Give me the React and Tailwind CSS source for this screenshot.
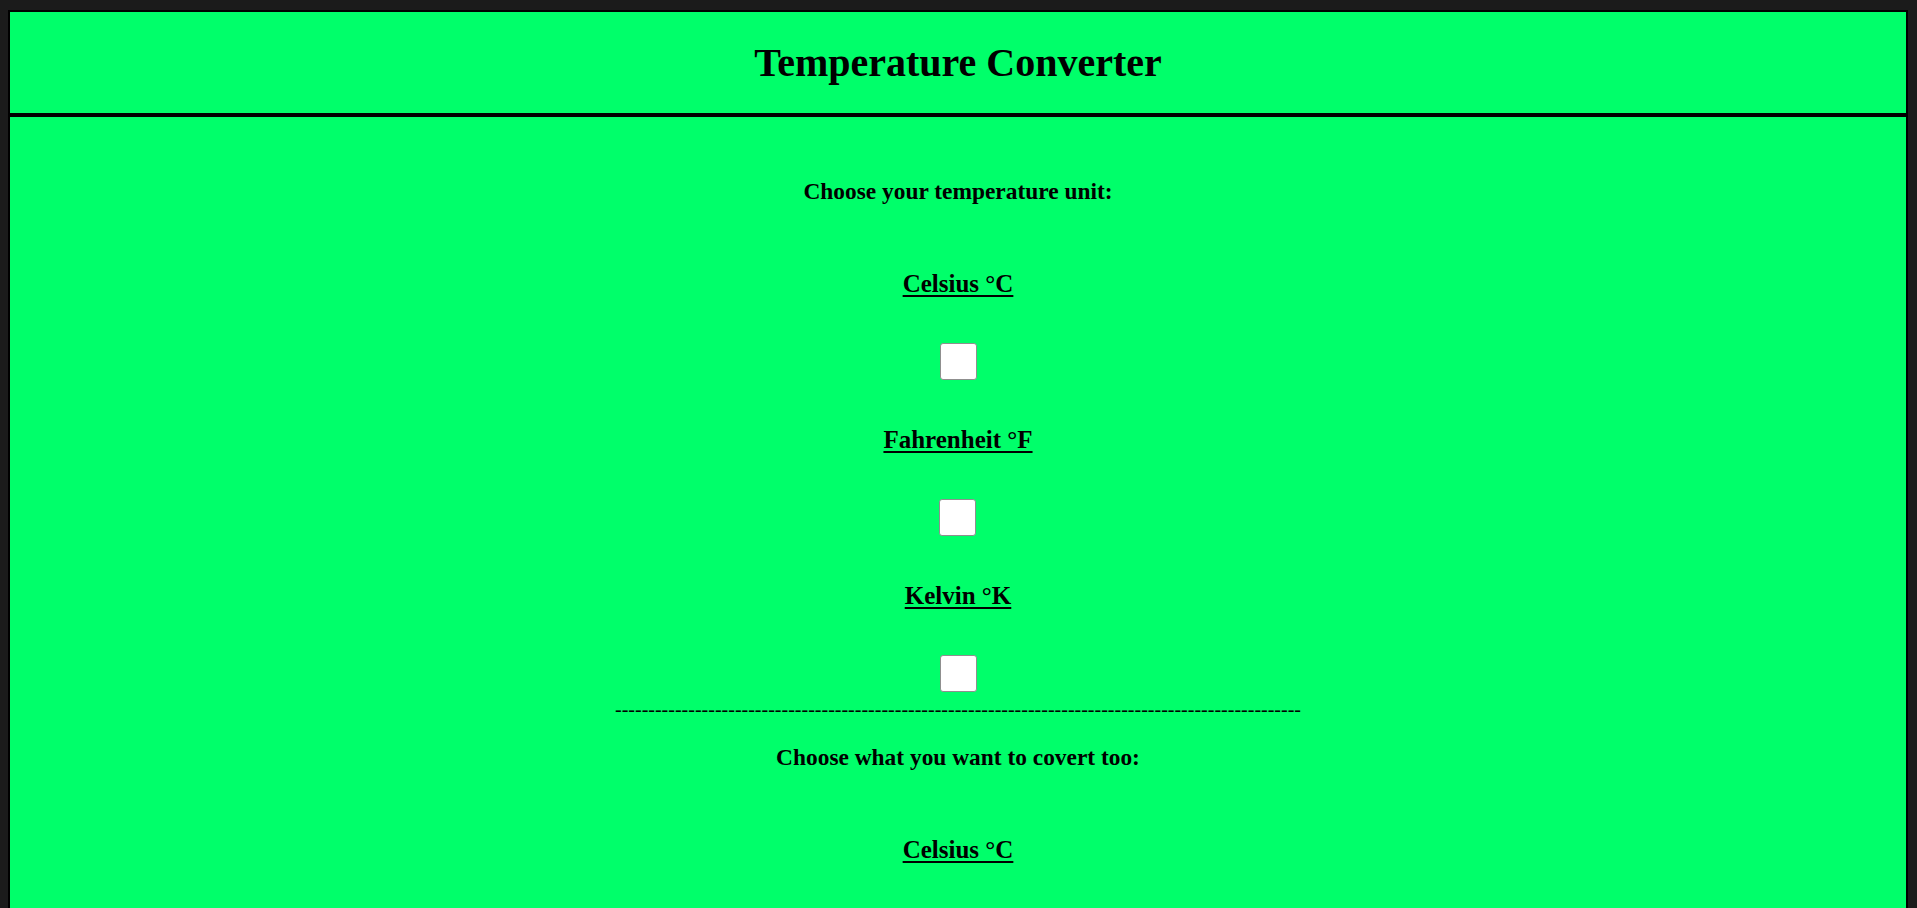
import { useState } from 'react'

const serif = 'font-["Liberation_Serif","Times_New_Roman",serif]'
const units = ['Celsius °C', 'Fahrenheit °F', 'Kelvin °K']

// ── one unit row: underlined label + checkbox ─────────────────────────────────

function UnitOption({ label, checked, onChange, first }) {
  return (
    <div className="flex flex-col items-center">
      <label
        className={`${first ? 'mt-[69px]' : 'mt-[48px]'} text-[25px] leading-[24px] font-bold underline underline-offset-[3px]`}
      >
        {label}
      </label>
      <input
        type="checkbox"
        checked={checked}
        onChange={onChange}
        className="mt-[47px] w-[37px] h-[37px] appearance-none bg-white border border-[#8f8f8f] rounded-[3px] checked:bg-[#0075ff]"
      />
    </div>
  )
}

export default function App() {
  const [from, setFrom] = useState(null)
  const [to, setTo]     = useState(null)

  return (
    <div className={`min-h-screen bg-[#1b1b1b] pl-2 pr-[9px] pt-[10px] pb-2 text-black ${serif}`}>
      {/* Header */}
      <header className="h-[105px] flex items-center justify-center bg-[#00ff6a] border-2 border-black">
        <h1 className="text-[40px] font-bold leading-none">Temperature Converter</h1>
      </header>

      {/* Converter body */}
      <main className="flex flex-col items-center bg-[#00ff6a] border-2 border-black pb-16">
        <h3 className="mt-[62px] text-[23.4px] leading-[24px] font-bold">Choose your temperature unit:</h3>
        {units.map((u, i) => (
          <UnitOption
            key={u}
            label={u}
            first={i === 0}
            checked={from === i}
            onChange={() => setFrom(from === i ? null : i)}
          />
        ))}

        <p className="mt-[9px] text-[20px] leading-[16px]">{'-'.repeat(103)}</p>

        <h3 className="mt-[28px] text-[23.4px] leading-[24px] font-bold">Choose what you want to covert too:</h3>
        {units.map((u, i) => (
          <UnitOption
            key={u}
            label={u}
            first={i === 0}
            checked={to === i}
            onChange={() => setTo(to === i ? null : i)}
          />
        ))}
      </main>
    </div>
  )
}
